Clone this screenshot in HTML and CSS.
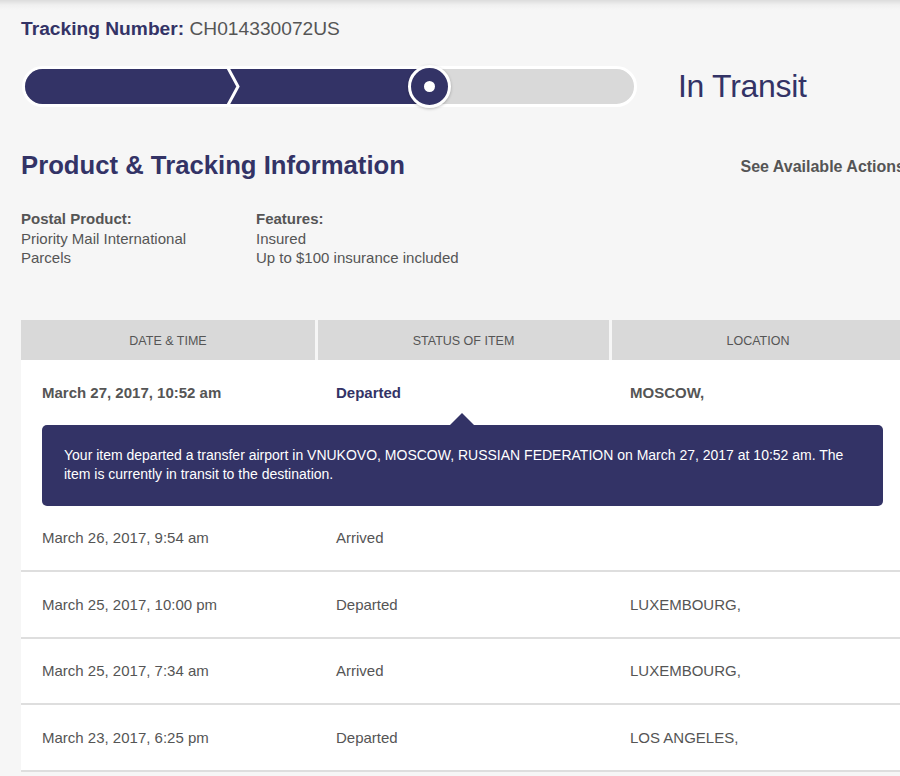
FILE: index.html
```html
<!DOCTYPE html>
<html lang="en">
<head>
<meta charset="utf-8">
<title>Tracking</title>
<link rel="stylesheet" href="styles.css">
</head>
<body>
<div class="page">
  <h1 class="tracking"><span class="tracking-label">Tracking Number:</span> <span class="tracking-value">CH014330072US</span></h1>

  <div class="progress">
    <div class="bar">
      <div class="fill">
        <svg class="chevron" width="18" height="35" viewBox="0 0 18 35"><path d="M4 -1 L14 17.5 L4 36" fill="none" stroke="#fff" stroke-width="3"/></svg>
        <span class="knob"><span class="dot"></span></span>
      </div>
    </div>
    <div class="status-big">In Transit</div>
  </div>

  <div class="section-head">
    <h2 class="section-title">Product &amp; Tracking Information</h2>
    <a class="actions">See Available Actions</a>
  </div>

  <div class="info">
    <div class="info-col first">
      <div class="info-label">Postal Product:</div>
      <div>Priority Mail International<br>Parcels</div>
    </div>
    <div class="info-col">
      <div class="info-label">Features:</div>
      <div>Insured<br>Up to $100 insurance included</div>
    </div>
  </div>

  <div class="table">
    <div class="thead">
      <div class="th c1">DATE &amp; TIME</div>
      <div class="th c2">STATUS OF ITEM</div>
      <div class="th c3">LOCATION</div>
    </div>
    <div class="tbody">
      <div class="row active">
        <div class="td c1">March 27, 2017, 10:52 am</div>
        <div class="td c2 status">Departed</div>
        <div class="td c3">MOSCOW,</div>
      </div>
      <div class="detail">
        <p>Your item departed a transfer airport in VNUKOVO, MOSCOW, RUSSIAN FEDERATION on March 27, 2017 at 10:52 am. The item is currently in transit to the destination.</p>
      </div>
      <div class="row">
        <div class="td c1">March 26, 2017, 9:54 am</div>
        <div class="td c2">Arrived</div>
        <div class="td c3"></div>
      </div>
      <div class="row">
        <div class="td c1">March 25, 2017, 10:00 pm</div>
        <div class="td c2">Departed</div>
        <div class="td c3">LUXEMBOURG,</div>
      </div>
      <div class="row">
        <div class="td c1">March 25, 2017, 7:34 am</div>
        <div class="td c2">Arrived</div>
        <div class="td c3">LUXEMBOURG,</div>
      </div>
      <div class="row">
        <div class="td c1">March 23, 2017, 6:25 pm</div>
        <div class="td c2">Departed</div>
        <div class="td c3">LOS ANGELES,</div>
      </div>
    </div>
  </div>
</div>
</body>
</html>
```

FILE: styles.css
```css
html, body {
  margin: 0;
  padding: 0;
}
body {
  background: linear-gradient(#dcdcdc 0, #f0f0f0 5px, #f6f6f6 10px, #f6f6f6 100%);
  font-family: "Liberation Sans", Arial, sans-serif;
  color: #555;
  overflow: hidden;
  height: 776px;
}
.page {
  width: 884px;
  margin-left: 21px;
  padding-top: 17px;
}
.tracking {
  margin: 0;
  font-size: 19.2px;
  line-height: 24px;
  font-weight: normal;
}
.tracking-label {
  font-weight: bold;
  color: #333366;
}
.tracking-value {
  color: #555;
}

.progress {
  display: flex;
  align-items: center;
  margin-top: 25px;
}
.bar {
  position: relative;
  width: 609px;
  height: 35px;
  margin-left: 1px;
  border: 3px solid #fff;
  border-radius: 21px;
  background: #d9d9d9;
  flex: none;
}
.fill {
  position: relative;
  width: 405px;
  height: 35px;
  background: #333366;
  border-radius: 18px 0 0 18px;
}
.chevron {
  position: absolute;
  left: 199px;
  top: 0;
}
.knob {
  position: absolute;
  right: -21px;
  top: -4px;
  width: 37px;
  height: 37px;
  border: 3px solid #fff;
  border-radius: 50%;
  background: #333366;
  box-shadow: 0 1px 3px rgba(0,0,0,0.25);
  display: flex;
  align-items: center;
  justify-content: center;
}
.dot {
  width: 11px;
  height: 11px;
  border-radius: 50%;
  background: #fff;
}
.status-big {
  margin-left: 41px;
  font-size: 32px;
  color: #333366;
  letter-spacing: -0.3px;
}

.section-head {
  display: flex;
  justify-content: space-between;
  align-items: center;
  margin-top: 43px;
}
.section-title {
  margin: 0;
  font-size: 25.7px;
  line-height: 30px;
  font-weight: bold;
  color: #333366;
}
.actions {
  font-size: 16px;
  font-weight: bold;
  color: #555;
  margin-top: 4px;
  white-space: nowrap;
}

.info {
  display: flex;
  margin-top: 29px;
  font-size: 15px;
  line-height: 19.5px;
}
.info-col.first {
  width: 235px;
}
.info-label {
  font-weight: bold;
}

.table {
  margin-top: 52px;
}
.thead {
  display: flex;
  gap: 3px;
}
.th {
  flex: none;
  background: #d9d9d9;
  height: 40px;
  padding-top: 2px;
  box-sizing: border-box;
  display: flex;
  align-items: center;
  justify-content: center;
  font-size: 12.5px;
  color: #555;
}
.th.c1 { width: 294px; }
.th.c2 { width: 291px; }
.th.c3 { width: 292px; }
.tbody {
  background: #fff;
}
.row {
  display: flex;
  height: 64.5px;
  border-bottom: 2px solid #dedede;
  align-items: center;
  font-size: 15px;
}
.row.active {
  height: 65px;
  border-bottom: none;
  font-weight: bold;
}
.td {
  flex: none;
  box-sizing: border-box;
  padding-left: 18px;
}
.td.c1 { width: 297px; padding-left: 21px; }
.td.c2 { width: 294px; }
.td.c3 { width: 293px; }
.td.status {
  color: #333366;
}
.detail {
  position: relative;
  margin: 0 22px 0 21px;
  background: #333366;
  border-radius: 5px;
  padding: 21px 22px;
  color: #fff;
  font-size: 14px;
  line-height: 19.5px;
}
.detail::before {
  content: "";
  position: absolute;
  left: 408px;
  top: -12px;
  border-left: 12px solid transparent;
  border-right: 12px solid transparent;
  border-bottom: 12px solid #333366;
}
.detail p {
  margin: 0;
}
```
